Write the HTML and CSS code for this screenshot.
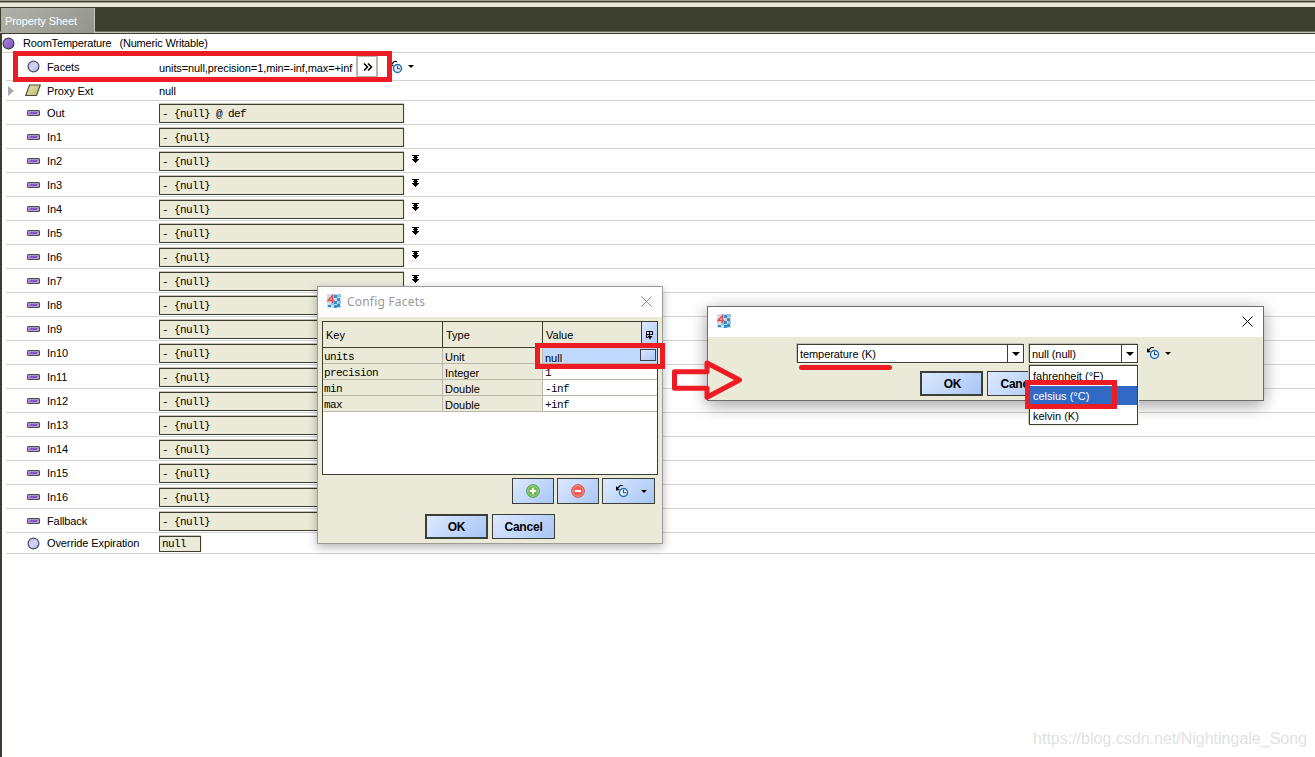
FILE: index.html
```html
<!DOCTYPE html>
<html lang="en">
<head>
    <meta charset="UTF-8">
    <meta name="viewport" content="width=device-width, initial-scale=1.0">
    <title>Property Sheet</title>
    <link rel="stylesheet" href="styles.css">
</head>
<body>
    <!-- shared icons -->
    <svg class="defs" width="0" height="0">
        <defs>
            <linearGradient id="violet" x1="0" y1="0" x2="1" y2="1"><stop offset="0" stop-color="#a888dc"/><stop offset="1" stop-color="#7d4fc0"/></linearGradient>
            <linearGradient id="lilac" x1="0" y1="0" x2="1" y2="1"><stop offset="0" stop-color="#b4b4ee"/><stop offset=".5" stop-color="#d4d4fa"/><stop offset="1" stop-color="#a9a9e6"/></linearGradient>
            <linearGradient id="olive" x1="0" y1="0" x2="1" y2="1"><stop offset="0" stop-color="#e8e5ae"/><stop offset="1" stop-color="#bcb86c"/></linearGradient>
        </defs>
        <symbol id="point" viewBox="0 0 13 13"><circle cx="6.5" cy="6.5" r="5.4" fill="url(#violet)" stroke="#44404e" stroke-width="1.2"/></symbol>
        <symbol id="ball" viewBox="0 0 13 13"><circle cx="6.5" cy="6.5" r="5.4" fill="url(#lilac)" stroke="#4c4c58" stroke-width="1.2"/></symbol>
        <symbol id="ext" viewBox="0 0 16 13"><path d="M4.5 1H15.3L11.5 11.5H.7Z" fill="url(#olive)" stroke="#4a4a38" stroke-width="1.1"/></symbol>
        <symbol id="slot" viewBox="0 0 13 6"><rect x=".6" y=".6" width="11.8" height="4.8" rx="1" fill="#cdb9ee" stroke="#4b4855" stroke-width="1.2"/><path d="M2.5 3h8" stroke="#8854cc" stroke-width="2"/></symbol>
        <symbol id="chev" viewBox="0 0 7 8"><path d="M0 0h7v1H5v1h1v1H5v1h2v1H6v1H5v1H4v1H3V7H2V6H1V5H0V4h2V3H1V2h1V1H0Z" fill="#000" shape-rendering="crispEdges"/></symbol>
        <symbol id="clock" viewBox="0 0 15 15"><path d="M1 2v4.5L5 6 3.2 4.4 5.5 2H8V1H5L2.4 3.6Z" fill="#000"/><circle cx="8.5" cy="8.5" r="4" fill="#e9f6ff" stroke="#2470ae" stroke-width="1.5"/><path d="M8.5 5.7v3H11" fill="none" stroke="#1c4e7e" stroke-width="1.1"/></symbol>
        <symbol id="app" viewBox="0 0 14 14">
            <rect width="14" height="14" fill="#d5dce2"/>
            <path d="M7 1h3v3H7ZM10 4h3v3h-3ZM7 7h3v3H7ZM10 10h3v3h-3ZM1 11h3v2H1ZM7 11h3v3H7Z" fill="#2d8fcf"/>
            <path d="M10 0h4v3h-4ZM4 8h3v3H4ZM11 7h3v3h-3Z" fill="#92c2e2"/>
            <path d="M5.5 9V1.5L1 6.5H7.5" fill="none" stroke="#e34a4e" stroke-width="1.4"/>
        </symbol>
    </svg>

    <div class="topbar"></div>
    <div class="tabs"><div class="tab">Property Sheet</div></div>

    <main class="sheet">
        <div class="title-row"><svg width="13" height="13"><use href="#point"/></svg><span>RoomTemperature</span><span class="kind">(Numeric Writable)</span></div>
        <div class="row facets">
            <span class="icon"><svg width="13" height="13"><use href="#ball"/></svg></span>
            <span class="name">Facets</span>
            <span class="value">units=null,precision=1,min=-inf,max=+inf</span>
            <span class="more"><svg width="10" height="8" viewBox="0 0 10 8"><path d="M1 .5 4.5 4 1 7.5M5 .5 8.5 4 5 7.5" fill="none" stroke="#000" stroke-width="1.5"/></svg></span>
            <svg class="history" width="15" height="15"><use href="#clock"/></svg><i class="caret"></i>
        </div>
        <div class="row proxy">
            <i class="expand"></i>
            <span class="icon"><svg width="16" height="13"><use href="#ext"/></svg></span>
            <span class="name">Proxy Ext</span><span class="value">null</span>
        </div>
        <div class="row"><span class="icon"><svg width="13" height="6"><use href="#slot"/></svg></span><span class="name">Out</span><span class="field">- {null} @ def</span></div>
        <div class="row"><span class="icon"><svg width="13" height="6"><use href="#slot"/></svg></span><span class="name">In1</span><span class="field">- {null}</span></div>
        <div class="row"><span class="icon"><svg width="13" height="6"><use href="#slot"/></svg></span><span class="name">In2</span><span class="field">- {null}</span><svg class="chev" width="7" height="8"><use href="#chev"/></svg></div>
        <div class="row"><span class="icon"><svg width="13" height="6"><use href="#slot"/></svg></span><span class="name">In3</span><span class="field">- {null}</span><svg class="chev" width="7" height="8"><use href="#chev"/></svg></div>
        <div class="row"><span class="icon"><svg width="13" height="6"><use href="#slot"/></svg></span><span class="name">In4</span><span class="field">- {null}</span><svg class="chev" width="7" height="8"><use href="#chev"/></svg></div>
        <div class="row"><span class="icon"><svg width="13" height="6"><use href="#slot"/></svg></span><span class="name">In5</span><span class="field">- {null}</span><svg class="chev" width="7" height="8"><use href="#chev"/></svg></div>
        <div class="row"><span class="icon"><svg width="13" height="6"><use href="#slot"/></svg></span><span class="name">In6</span><span class="field">- {null}</span><svg class="chev" width="7" height="8"><use href="#chev"/></svg></div>
        <div class="row"><span class="icon"><svg width="13" height="6"><use href="#slot"/></svg></span><span class="name">In7</span><span class="field">- {null}</span><svg class="chev" width="7" height="8"><use href="#chev"/></svg></div>
        <div class="row"><span class="icon"><svg width="13" height="6"><use href="#slot"/></svg></span><span class="name">In8</span><span class="field">- {null}</span></div>
        <div class="row"><span class="icon"><svg width="13" height="6"><use href="#slot"/></svg></span><span class="name">In9</span><span class="field">- {null}</span></div>
        <div class="row"><span class="icon"><svg width="13" height="6"><use href="#slot"/></svg></span><span class="name">In10</span><span class="field">- {null}</span></div>
        <div class="row"><span class="icon"><svg width="13" height="6"><use href="#slot"/></svg></span><span class="name">In11</span><span class="field">- {null}</span></div>
        <div class="row"><span class="icon"><svg width="13" height="6"><use href="#slot"/></svg></span><span class="name">In12</span><span class="field">- {null}</span></div>
        <div class="row"><span class="icon"><svg width="13" height="6"><use href="#slot"/></svg></span><span class="name">In13</span><span class="field">- {null}</span></div>
        <div class="row"><span class="icon"><svg width="13" height="6"><use href="#slot"/></svg></span><span class="name">In14</span><span class="field">- {null}</span></div>
        <div class="row"><span class="icon"><svg width="13" height="6"><use href="#slot"/></svg></span><span class="name">In15</span><span class="field">- {null}</span></div>
        <div class="row"><span class="icon"><svg width="13" height="6"><use href="#slot"/></svg></span><span class="name">In16</span><span class="field">- {null}</span></div>
        <div class="row"><span class="icon"><svg width="13" height="6"><use href="#slot"/></svg></span><span class="name">Fallback</span><span class="field">- {null}</span></div>
        <div class="row override"><span class="icon"><svg width="13" height="13"><use href="#ball"/></svg></span><span class="name">Override Expiration</span><span class="field short">null</span></div>
    </main>

    <div class="watermark">https://blog.csdn.net/Nightingale_Song</div>

    <!-- Config Facets window -->
    <div class="dialog config">
        <div class="dialog-title"><svg width="14" height="14"><use href="#app"/></svg><span>Config Facets</span><svg class="close" width="11" height="11" viewBox="0 0 11 11"><path d="M.5.5l10 10M10.5.5l-10 10"/></svg></div>
        <div class="grid">
            <div class="grid-head">
                <span>Key</span><span>Type</span><span>Value</span>
                <span class="opts"><svg width="9" height="10" viewBox="0 0 9 10"><path d="M1.5 8V1.5h6V5M1.5 4.5h6M4.5 1.5V6M1.5 7.5H3" fill="none" stroke="#000"/><path d="M2.500 6h5L5 9.500Z"/></svg></span>
            </div>
            <div class="grid-row selected"><span class="mono">units</span><span>Unit</span><span class="val">null<b class="edit"></b></span></div>
            <div class="grid-row"><span class="mono">precision</span><span>Integer</span><span class="val mono">1</span></div>
            <div class="grid-row"><span class="mono">min</span><span>Double</span><span class="val mono">-inf</span></div>
            <div class="grid-row"><span class="mono">max</span><span>Double</span><span class="val mono">+inf</span></div>
        </div>
        <div class="tools">
            <div class="btn"><svg width="14" height="14" viewBox="0 0 14 14"><circle cx="7" cy="7" r="6.3" fill="#6cb850" stroke="#4b9a3e"/><circle cx="7" cy="7" r="5.3" fill="none" stroke="#a9d998" stroke-width=".8"/><path d="M7 3.8v6.4M3.8 7h6.4" stroke="#fff" stroke-width="2"/></svg></div>
            <div class="btn"><svg width="14" height="14" viewBox="0 0 14 14"><circle cx="7" cy="7" r="6.3" fill="#ec5b4b" stroke="#d14a3f"/><circle cx="7" cy="7" r="5.3" fill="none" stroke="#f6a99f" stroke-width=".8"/><path d="M3.8 7h6.4" stroke="#fff" stroke-width="2.2"/></svg></div>
            <div class="btn wide"><svg width="15" height="15"><use href="#clock"/></svg><i class="caret"></i></div>
        </div>
        <div class="actions"><div class="btn default">OK</div><div class="btn">Cancel</div></div>
    </div>

    <!-- unit picker window -->
    <div class="dialog units">
        <div class="dialog-title"><svg width="14" height="14"><use href="#app"/></svg><svg class="close" width="11" height="11" viewBox="0 0 11 11"><path d="M.5.5l10 10M10.5.5l-10 10"/></svg></div>
        <div class="pickers">
            <div class="select quantity"><span>temperature (K)</span><b><i></i></b></div>
            <div class="select unit"><span>null (null)</span><b><i></i></b></div>
            <svg class="history" width="15" height="15"><use href="#clock"/></svg><i class="caret"></i>
        </div>
        <div class="actions"><div class="btn default">OK</div><div class="btn">Cancel</div></div>
        <div class="options"><div>fahrenheit (°F)</div><div class="active">celsius (°C)</div><div>kelvin (K)</div></div>
    </div>

    <!-- red marks -->
    <div class="mark mark-facets"></div>
    <div class="mark mark-value"></div>
    <div class="mark mark-celsius"></div>
    <svg class="mark-lines" width="230" height="50" viewBox="670 355 230 50">
        <path d="M674.5 371.7H707V363L739.5 380 707 397.3V388.3H674.5Z"/>
        <path d="M801.5 367.5H889.5"/>
    </svg>
</body>
</html>
```
FILE: styles.css
```css
* {
    box-sizing: border-box;
}

body {
    margin: 0;
    height: 757px;
    position: relative;
    overflow: hidden;
    background: #fff;
    color: #000;
    font: 11px "Liberation Sans", Arial, sans-serif;
}

svg {
    display: block;
    flex: none;
}

.defs {
    position: absolute;
}

.topbar {
    height: 7px;
    background: linear-gradient(#9c9e90 0 1px, #3e402f 1px 2px, #9c9e90 2px 3px, #ebe9d7 3px);
}

.tabs {
    height: 27px;
    padding: 1px 0 0 1px;
    background: linear-gradient(#3c3f2e 0 24px, #6d6f5e 24px 25px, #c3c2b2 25px 26px, #3c3f2e 26px);
}

.tab {
    width: 94px;
    height: 25px;
    padding-left: 4px;
    line-height: 26px;
    letter-spacing: -0.1px;
    color: #fff;
    background: linear-gradient(135deg, #b0b1a9, #94958b);
    border-right: 1px solid #c7c7bd;
}

.sheet {
    height: 723px;
    border-left: 2px solid #3c3f2e;
    letter-spacing: -0.1px;
}

.title-row {
    display: flex;
    align-items: center;
    height: 19px;
    border-bottom: 1px solid #d2d2d0;
    letter-spacing: -0.18px;
}

.title-row span {
    margin-left: 8px;
}

.row {
    display: flex;
    align-items: center;
    position: relative;
    height: 24px;
    margin-left: 4px;
    padding-left: 19px;
    border-bottom: 1px solid #d2d2d0;
}

.facets {
    height: 28px;
}

.proxy {
    height: 20px;
}

.override {
    height: 21px;
}

.icon {
    display: flex;
    justify-content: center;
    width: 16px;
    flex: none;
}

.name {
    width: 112px;
    margin-left: 6px;
    flex: none;
    white-space: nowrap;
}

.value {
    white-space: nowrap;
}

.facets .value {
    width: 197px;
    padding-top: 2px;
}

.more {
    display: flex;
    align-items: center;
    justify-content: center;
    width: 22px;
    height: 21px;
    padding-left: 2px;
    border: solid #b9b9aa;
    border-width: 1px 2px;
}

.facets .history {
    margin: 1px 0 0 11px;
}

.caret {
    border: 3px solid transparent;
    border-top-color: #000;
    border-bottom: 0;
    margin-left: 4px;
}

.expand {
    position: absolute;
    left: 2px;
    border: 5px solid transparent;
    border-left: 6px solid #aaa;
    border-right: 0;
}

.field {
    width: 245px;
    height: 19px;
    margin-top: 1px;
    padding-left: 2px;
    border: 1px solid #3c3f2e;
    background: #ebe9d7;
    box-shadow: 0 -1px 0 #c4c3b3, 1px 0 0 #f4f3e8;
    line-height: 19px;
}

.field, .mono {
    font-family: "Liberation Mono", "Courier New", monospace;
    font-size: 11px;
    letter-spacing: -0.6px;
    white-space: pre;
}

.field.short {
    width: 42px;
    height: 16px;
    line-height: 14px;
}

.chev {
    margin: -3px 0 0 8px;
}

.watermark {
    position: absolute;
    right: 8px;
    bottom: 9px;
    font-size: 16px;
    color: #e2e2e2;
}

.dialog {
    position: absolute;
    background: #ebe9d7;
    border: 1px solid #9b9b98;
    box-shadow: 0 3px 9px rgba(0, 0, 0, 0.3);
}

.dialog-title {
    display: flex;
    align-items: center;
    height: 30px;
    padding: 0 10px 2px 9px;
    background: #fff;
    font: 12px "Noto Sans", sans-serif;
    letter-spacing: 0.2px;
    color: #999;
}

.dialog-title span {
    margin-left: 6px;
}

.close {
    margin-left: auto;
    stroke: #888;
    fill: none;
}

.config {
    left: 317px;
    top: 286px;
    width: 346px;
    height: 258px;
}

.grid {
    height: 154px;
    margin: 4px 4px 0;
    border: 1px solid #3c3f2e;
    background: #fff;
}

.grid-head, .grid-row {
    display: grid;
    grid-template-columns: 120px 100px 1fr;
}

.grid-head {
    grid-template-columns: 120px 100px 99px 1fr;
    height: 26px;
    line-height: 26px;
    background: #ebe9d7;
    border-bottom: 1px solid #3c3f2e;
}

.grid-head span {
    padding-left: 3px;
    border-right: 1px solid #3c3f2e;
}

.grid-head .opts {
    display: flex;
    align-items: center;
    justify-content: center;
    padding: 0;
    border: 0;
    background: linear-gradient(135deg, #dce9ff, #a9c6f5);
}

.grid-row {
    height: 16px;
    line-height: 18px;
}

.grid-row span {
    height: 16px;
    padding-left: 2px;
    overflow: hidden;
    background: #ebe9d7;
    border-right: 1px solid #b9b8a8;
    border-bottom: 1px solid #b9b8a8;
}

.grid-row .mono:first-child {
    padding-left: 1px;
    line-height: 19px;
}

.grid-row .val {
    display: flex;
    justify-content: space-between;
    border-right: 0;
    background: #fff;
}

.grid-row.selected .val {
    background: #bfdafd;
    line-height: 20px;
}

.edit {
    width: 16px;
    height: 12px;
    margin: 1px 1px 0 0;
    border: 1px solid #3c4150;
    background: linear-gradient(135deg, #dce9ff, #a9c6f5);
}

.btn {
    display: flex;
    align-items: center;
    justify-content: center;
    width: 63px;
    height: 25px;
    border: 1px solid #3c3f38;
    background: linear-gradient(135deg, #dce9ff, #a9c6f5);
    font-size: 12px;
    font-weight: bold;
    letter-spacing: -0.2px;
}

.btn.default {
    border-width: 2px;
}

.tools {
    display: flex;
    justify-content: flex-end;
    gap: 3px;
    padding: 3px 7px 0 0;
}

.tools .btn {
    width: 42px;
    height: 26px;
}

.tools .btn.wide {
    width: 53px;
    padding-left: 5px;
}

.tools .caret {
    margin-left: 11px;
}

.actions {
    display: flex;
    gap: 4px;
    padding: 10px 0 0 107px;
}

.units {
    left: 707px;
    top: 306px;
    width: 557px;
    height: 95px;
    border-color: #6c6c6a;
    box-shadow: 0 4px 16px rgba(0, 0, 0, 0.38);
}

.units .close {
    stroke: #000;
}

.pickers {
    display: flex;
    padding: 7px 0 0 89px;
    letter-spacing: -0.08px;
}

.select {
    display: flex;
    justify-content: space-between;
    height: 19px;
    line-height: 19px;
    padding-left: 2px;
    border: 1px solid #3c3f2e;
    background: #fff;
    box-shadow: -1px -1px 0 #c4c3b3, 1px 1px 0 #f4f3e8;
}

.select b {
    display: flex;
    align-items: center;
    justify-content: center;
    width: 16px;
    border-left: 1px solid #3c3f2e;
}

.select i {
    border: 4px solid transparent;
    border-top-color: #000;
    border-bottom: 0;
}

.quantity {
    width: 227px;
}

.unit {
    width: 109px;
    margin-left: 5px;
}

.pickers .history {
    margin: 2px 0 0 8px;
}

.pickers .caret {
    margin: 8px 0 0 4px;
    height: 3px;
}

.units .actions {
    padding: 8px 0 0 212px;
}

.units .btn {
    padding-left: 2px;
}

.options {
    position: absolute;
    left: 321px;
    top: 58px;
    width: 109px;
    height: 60px;
    border: 1px solid #3c3f2e;
    background: #fff;
    box-shadow: -1px -1px 0 #c4c3b3, 1px 1px 0 #f4f3e8;
}

.options div {
    height: 20px;
    line-height: 21px;
    padding-left: 3px;
}

.options .active {
    height: 19px;
    margin-bottom: 1px;
    background: #316ac5;
    color: #fff;
}

.options div:last-child {
    height: 18px;
}

.mark {
    position: absolute;
    border: 5px solid #ed1c24;
}

.mark-facets {
    left: 13px;
    top: 51px;
    width: 379px;
    height: 31px;
}

.mark-value {
    left: 535px;
    top: 343px;
    width: 130px;
    height: 26px;
}

.mark-celsius {
    left: 1025px;
    top: 380px;
    width: 92px;
    height: 29px;
}

.mark-lines {
    position: absolute;
    left: 670px;
    top: 355px;
    fill: none;
    stroke: #ed1c24;
    stroke-width: 5;
    stroke-linecap: round;
    stroke-linejoin: round;
}
```
